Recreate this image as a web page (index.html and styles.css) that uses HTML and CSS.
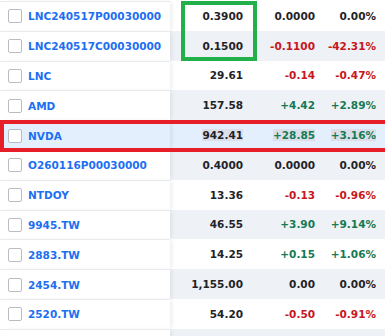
FILE: index.html
```html
<!DOCTYPE html>
<html lang="en">
<head>
    <meta charset="UTF-8">
    <meta name="viewport" content="width=device-width, initial-scale=1.0">
    <title>Watchlist</title>
    <link rel="stylesheet" href="styles.css">
</head>
<body>
    <div class="watchlist">
        <!-- Quote rows -->
        <div class="quote-grid">
            <div class="row">
                <div class="sym"><span class="check"></span><a href="#">LNC240517P00030000</a></div>
                <div class="num">0.3900</div>
                <div class="num">0.0000</div>
                <div class="num">0.00%</div>
            </div>
            <div class="row">
                <div class="sym"><span class="check"></span><a href="#">LNC240517C00030000</a></div>
                <div class="num">0.1500</div>
                <div class="num down">-0.1100</div>
                <div class="num down">-42.31%</div>
            </div>
            <div class="row">
                <div class="sym"><span class="check"></span><a href="#">LNC</a></div>
                <div class="num">29.61</div>
                <div class="num down">-0.14</div>
                <div class="num down">-0.47%</div>
            </div>
            <div class="row">
                <div class="sym"><span class="check"></span><a href="#">AMD</a></div>
                <div class="num">157.58</div>
                <div class="num up">+4.42</div>
                <div class="num up">+2.89%</div>
            </div>
            <div class="row selected">
                <div class="sym"><span class="check"></span><a href="#">NVDA</a></div>
                <div class="num"><span class="mark">942.41</span></div>
                <div class="num up"><span class="mark">+28.85</span></div>
                <div class="num up"><span class="mark">+3.16%</span></div>
            </div>
            <div class="row">
                <div class="sym"><span class="check"></span><a href="#">O260116P00030000</a></div>
                <div class="num">0.4000</div>
                <div class="num">0.0000</div>
                <div class="num">0.00%</div>
            </div>
            <div class="row">
                <div class="sym"><span class="check"></span><a href="#">NTDOY</a></div>
                <div class="num">13.36</div>
                <div class="num down">-0.13</div>
                <div class="num down">-0.96%</div>
            </div>
            <div class="row">
                <div class="sym"><span class="check"></span><a href="#">9945.TW</a></div>
                <div class="num">46.55</div>
                <div class="num up">+3.90</div>
                <div class="num up">+9.14%</div>
            </div>
            <div class="row">
                <div class="sym"><span class="check"></span><a href="#">2883.TW</a></div>
                <div class="num">14.25</div>
                <div class="num up">+0.15</div>
                <div class="num up">+1.06%</div>
            </div>
            <div class="row">
                <div class="sym"><span class="check"></span><a href="#">2454.TW</a></div>
                <div class="num">1,155.00</div>
                <div class="num">0.00</div>
                <div class="num">0.00%</div>
            </div>
            <div class="row">
                <div class="sym"><span class="check"></span><a href="#">2520.TW</a></div>
                <div class="num">54.20</div>
                <div class="num down">-0.50</div>
                <div class="num down">-0.91%</div>
            </div>
            <!-- next row, scrolled below the fold -->
            <div class="row">
                <div class="sym"></div>
                <div class="num"></div>
                <div class="num"></div>
                <div class="num"></div>
            </div>
        </div>

        <!-- Annotation boxes -->
        <div class="callout callout-green"></div>
        <div class="callout callout-red"></div>
    </div>
</body>
</html>
```

FILE: styles.css
```css
* {
    margin: 0;
    padding: 0;
    box-sizing: border-box;
}

body {
    font-family: "DejaVu Sans", Verdana, sans-serif;
    font-size: 10.5px;
    font-weight: bold;
    color: #1f2328;
    background: white;
    overflow: hidden;
}

.watchlist {
    position: relative;
    padding-top: 1px;
}

.quote-grid {
    display: flex;
    flex-direction: column;
}

.row {
    display: grid;
    grid-template-columns: 170px 81px 72px 62px;
    height: 29.8px;
}

.row:nth-child(even) .num {
    background: #eef1f5;
}

.sym {
    position: relative;
    z-index: 1;
    display: flex;
    align-items: center;
    gap: 6px;
    padding-left: 8px;
    background: white;
    border-top: 1px solid #e8eaed;
    box-shadow: 3px 0 4px -1px rgba(0, 0, 0, 0.07);
    white-space: nowrap;
}

.sym a {
    color: #1d6ff2;
    text-decoration: none;
}

.check {
    width: 14px;
    height: 14px;
    border: 1.5px solid #b9bdc3;
    border-radius: 2px;
    background: white;
    flex-shrink: 0;
}

.num {
    display: flex;
    align-items: center;
    justify-content: flex-end;
    padding-right: 8px;
    white-space: nowrap;
}

.num:last-child {
    padding-right: 9px;
}

.up {
    color: #147a55;
}

.down {
    color: #c8161d;
}

.row.selected .sym,
.row.selected .num {
    background: #e3effc;
}

.mark {
    background: #dcdfe9;
}

.callout {
    position: absolute;
    pointer-events: none;
    z-index: 2;
}

.callout-green {
    top: 1px;
    left: 181px;
    width: 76px;
    height: 60px;
    border: 4px solid #22b04b;
}

.callout-red {
    top: 120px;
    left: 0;
    width: 400px;
    height: 32px;
    border: 4px solid #e61e27;
}
```
